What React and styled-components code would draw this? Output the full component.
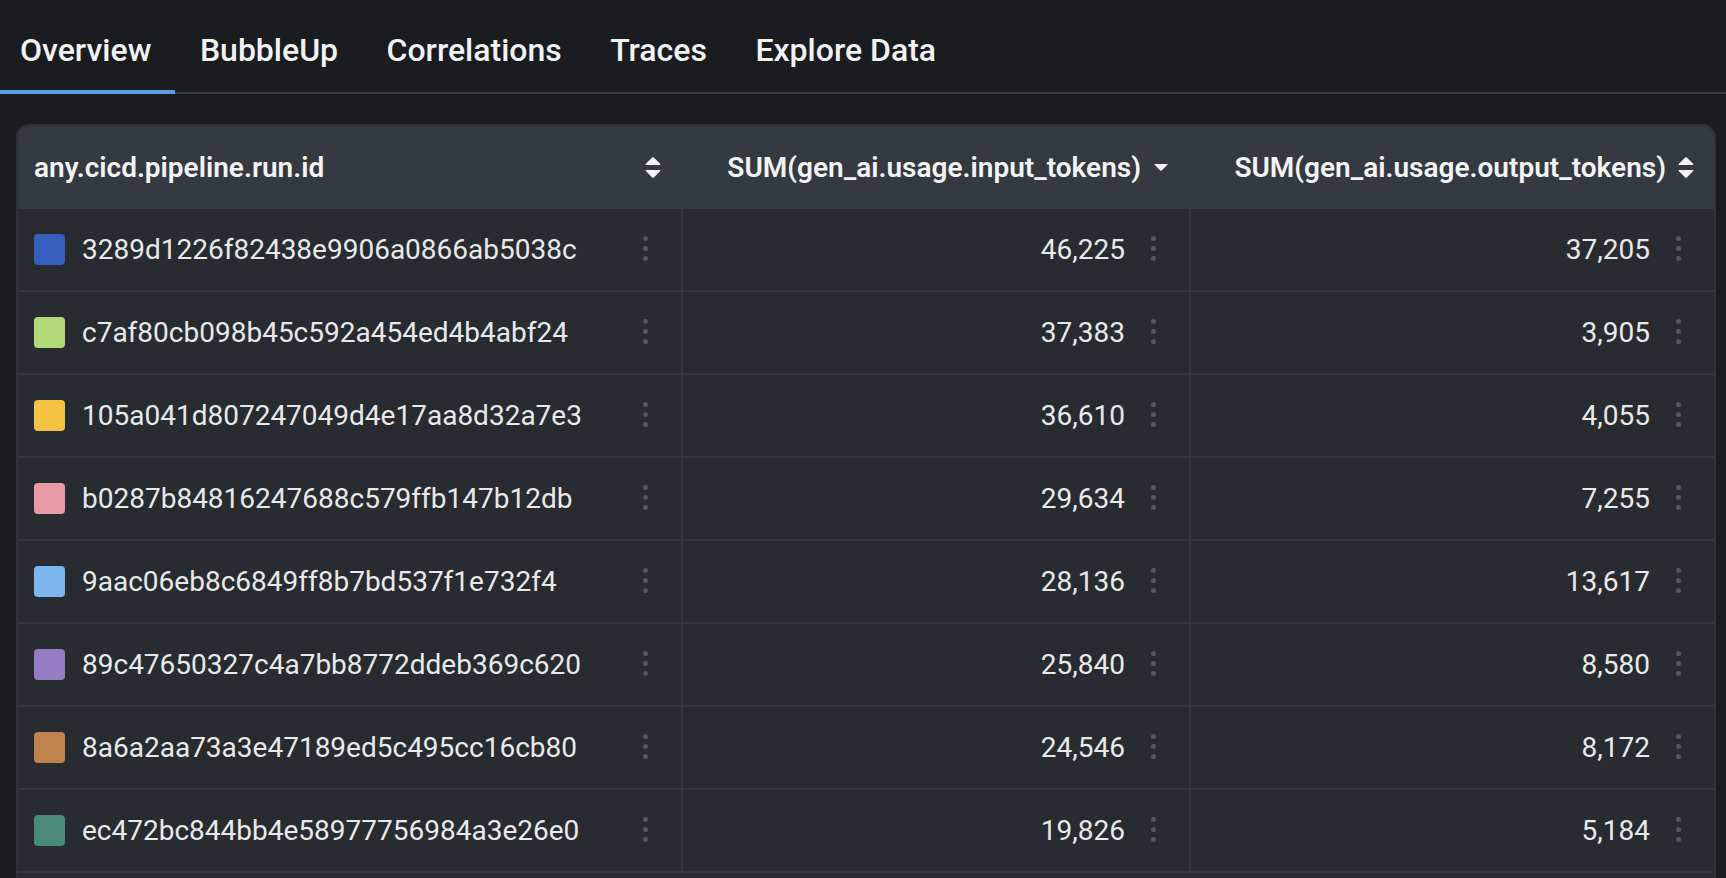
import React from "react";
import styled, { createGlobalStyle } from "styled-components";

const GlobalStyle = createGlobalStyle`
  html, body {
    margin: 0;
    padding: 0;
    overflow: hidden;
    background: #1b1c1f;
  }
  * { box-sizing: border-box; }
  body {
    font-family: Roboto, "Liberation Sans", sans-serif;
    -webkit-font-smoothing: antialiased;
  }
`;

const Page = styled.div`
  height: 100vh;
  overflow: hidden;
  background: #1b1c1f;
  display: flex;
  flex-direction: column;
`;

const TabBar = styled.nav`
  display: flex;
  gap: 4.5px;
  height: 94px;
  flex-shrink: 0;
  box-shadow: inset 0 -2px 0 #393c42;
`;

const Tab = styled.div`
  display: flex;
  align-items: center;
  padding: 6px 24px 0 20px;
  font-size: 32px;
  font-weight: 500;
  color: #f1f2f3;
  white-space: nowrap;
  box-shadow: ${(p) => (p.$active ? "inset 0 -4px 0 #5b9de6" : "none")};
`;

const Card = styled.section`
  flex: 1;
  margin: 30px 10px 0 16px;
  background: #282b30;
  border: 2px solid #2f3237;
  border-bottom: none;
  border-radius: 14px 14px 0 0;
  overflow: hidden;
`;

const cols = "663px 508px 1fr";

const HeaderRow = styled.div`
  display: grid;
  grid-template-columns: ${cols};
  height: 83px;
  background: #353940;
`;

const HeaderCell = styled.div`
  display: flex;
  align-items: center;
  justify-content: ${(p) => (p.$numeric ? "flex-end" : "space-between")};
  gap: 12px;
  padding: 0 20px 0 16px;
  font-size: 28px;
  font-weight: 600;
  color: #f2f3f4;
  white-space: nowrap;
`;

const BodyRow = styled.div`
  display: grid;
  grid-template-columns: ${cols};
  height: 83px;
  border-bottom: 2px solid #34373d;
`;

const Cell = styled.div`
  display: flex;
  align-items: center;
  justify-content: ${(p) => (p.$numeric ? "flex-end" : "flex-start")};
  gap: ${(p) => (p.$numeric ? "16px" : "17px")};
  padding: 0 24px 0 16px;
  border-left: ${(p) => (p.$divider ? "2px solid #34373d" : "none")};
  font-size: 28px;
  font-weight: 400;
  color: #e8e9eb;
  white-space: nowrap;
`;

const Swatch = styled.span`
  width: 31px;
  height: 31px;
  border-radius: 4px;
  background: ${(p) => p.$color};
  flex-shrink: 0;
`;

const IdText = styled.span`
  flex: 1;
`;

const Kebab = styled.span`
  width: 24px;
  height: 30px;
  display: flex;
  flex-direction: column;
  align-items: center;
  justify-content: center;
  gap: 5px;
  flex-shrink: 0;
  margin-top: -2px;
  & > i {
    display: block;
    width: 5px;
    height: 5px;
    border-radius: 50%;
    background: #53565c;
  }
`;

const IconBox = styled.span`
  width: 16px;
  height: 21px;
  display: flex;
  align-items: center;
  justify-content: center;
  flex-shrink: 0;
`;

const SortBoth = () => (
  <IconBox>
    <svg width="16" height="21" viewBox="0 0 16 21">
      <path d="M7.2 0.6 Q8 -0.2 8.8 0.6 L15.3 7.1 Q15.8 8 14.8 8 L1.2 8 Q0.2 8 0.7 7.1 Z" fill="#f2f3f4" />
      <path d="M1.2 13 L14.8 13 Q15.8 13 15.3 13.9 L8.8 20.4 Q8 21.2 7.2 20.4 L0.7 13.9 Q0.2 13 1.2 13 Z" fill="#f2f3f4" />
    </svg>
  </IconBox>
);

const SortDown = () => (
  <IconBox>
    <svg width="16" height="21" viewBox="0 0 16 21">
      <path d="M2 7 L14 7 Q15 7 14.4 7.8 L8.7 13.6 Q8 14.3 7.3 13.6 L1.6 7.8 Q1 7 2 7 Z" fill="#f2f3f4" />
    </svg>
  </IconBox>
);

const Dots = () => (
  <Kebab>
    <i />
    <i />
    <i />
  </Kebab>
);

const rows = [
  { id: "3289d1226f82438e9906a0866ab5038c", color: "#365ebe", input: "46,225", output: "37,205" },
  { id: "c7af80cb098b45c592a454ed4b4abf24", color: "#b1d977", input: "37,383", output: "3,905" },
  { id: "105a041d807247049d4e17aa8d32a7e3", color: "#f5c242", input: "36,610", output: "4,055" },
  { id: "b0287b84816247688c579ffb147b12db", color: "#e99aa7", input: "29,634", output: "7,255" },
  { id: "9aac06eb8c6849ff8b7bd537f1e732f4", color: "#7ab5ee", input: "28,136", output: "13,617" },
  { id: "89c47650327c4a7bb8772ddeb369c620", color: "#967cc2", input: "25,840", output: "8,580" },
  { id: "8a6a2aa73a3e47189ed5c495cc16cb80", color: "#c1834e", input: "24,546", output: "8,172" },
  { id: "ec472bc844bb4e58977756984a3e26e0", color: "#4b8a77", input: "19,826", output: "5,184" },
];

const tabs = ["Overview", "BubbleUp", "Correlations", "Traces", "Explore Data"];

export default function App() {
  return (
    <>
      <GlobalStyle />
      <Page>
        <TabBar>
          {tabs.map((t, i) => (
            <Tab key={t} $active={i === 0}>
              {t}
            </Tab>
          ))}
        </TabBar>
        <Card>
          <HeaderRow>
            <HeaderCell>
              <span>any.cicd.pipeline.run.id</span>
              <SortBoth />
            </HeaderCell>
            <HeaderCell $numeric>
              <span>SUM(gen_ai.usage.input_tokens)</span>
              <SortDown />
            </HeaderCell>
            <HeaderCell $numeric>
              <span>SUM(gen_ai.usage.output_tokens)</span>
              <SortBoth />
            </HeaderCell>
          </HeaderRow>
          {rows.map((r) => (
            <BodyRow key={r.id}>
              <Cell>
                <Swatch $color={r.color} />
                <IdText>{r.id}</IdText>
                <Dots />
              </Cell>
              <Cell $numeric $divider>
                <span>{r.input}</span>
                <Dots />
              </Cell>
              <Cell $numeric $divider>
                <span>{r.output}</span>
                <Dots />
              </Cell>
            </BodyRow>
          ))}
        </Card>
      </Page>
    </>
  );
}
